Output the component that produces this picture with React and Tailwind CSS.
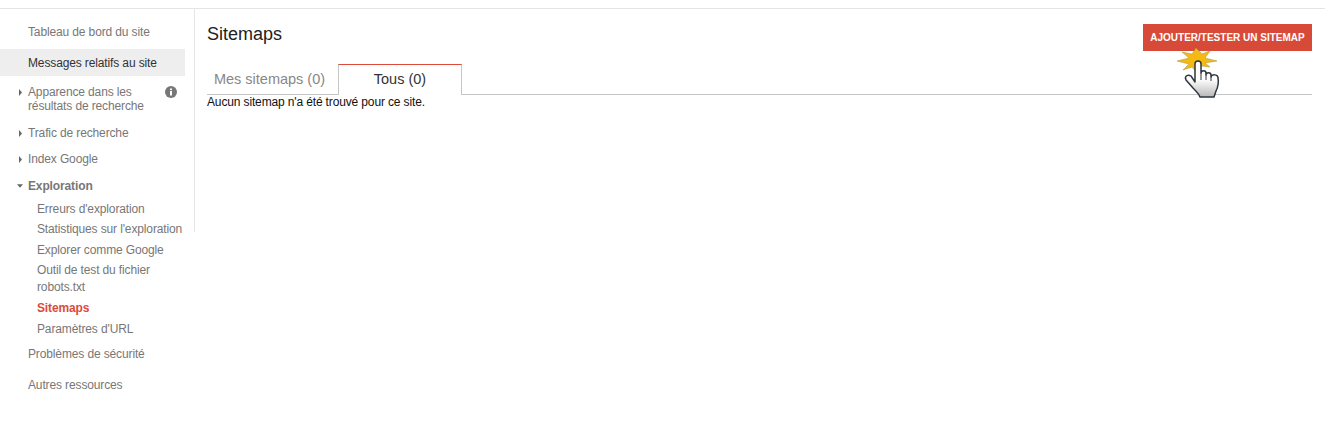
import React from "react";

const Arrow = ({ open }) =>
  open ? (
    <svg width="7" height="4" viewBox="0 0 7 4" className="mr-[5px] ml-[-1px]">
      <path d="M0 0h7L3.5 4z" fill="#666" />
    </svg>
  ) : (
    <svg width="3" height="7" viewBox="0 0 3 7" className="mr-[6px] ml-[1px]">
      <path d="M0 0l3 3.5L0 7z" fill="#666" />
    </svg>
  );

const TopItem = ({ label, arrow, mt, bold }) => (
  <div className={`flex items-center pl-[18px] h-[16px] ${mt} ${bold ? "font-bold" : ""}`}>
    <span className="flex w-[10px] items-center">{arrow && <Arrow open={bold} />}</span>
    <span>{label}</span>
  </div>
);

const SubItem = ({ label, mt, active }) => (
  <div className={`pl-[37px] leading-[17px] ${mt} ${active ? "font-bold text-[#dd4b39]" : ""}`}>{label}</div>
);

const Sidebar = () => (
  <aside className="w-[195px] h-[223px] shrink-0 border-r border-[#e5e5e5] text-[12px] tracking-[-0.13px] text-[#777]">
    <div className="w-[300px]">
      <TopItem label="Tableau de bord du site" mt="mt-[15px]" />
      <div className="mt-[9px] flex h-[27px] w-[185px] items-center bg-[#eeeeee] pl-[28px] text-[#333]">
        Messages relatifs au site
      </div>
      <div className="relative mt-[9px] w-[185px] pl-[18px] leading-[14px]">
        <div className="flex">
          <span className="flex h-[14px] w-[10px] items-center"><Arrow /></span>
          <span>
            Apparence dans les
            <br />
            résultats de recherche
          </span>
        </div>
        <svg width="12" height="12" viewBox="0 0 12 12" className="absolute right-[8px] top-[1px]">
          <circle cx="6" cy="6" r="6" fill="#777" />
          <rect x="5" y="5" width="2" height="4.500" fill="#fff" />
          <rect x="5" y="2.500" width="2" height="1.600" fill="#fff" />
        </svg>
      </div>
      <TopItem label="Trafic de recherche" arrow mt="mt-[12px]" />
      <TopItem label="Index Google" arrow mt="mt-[10px]" />
      <TopItem label="Exploration" arrow bold mt="mt-[11px]" />
      <SubItem label="Erreurs d'exploration" mt="mt-[7px]" />
      <SubItem label="Statistiques sur l'exploration" mt="mt-[3px]" />
      <SubItem label="Explorer comme Google" mt="mt-[4px]" />
      <SubItem label="Outil de test du fichier" mt="mt-[3px]" />
      <SubItem label="robots.txt" />
      <SubItem label="Sitemaps" mt="mt-[4px]" active />
      <SubItem label="Paramètres d'URL" mt="mt-[4px]" />
      <TopItem label="Problèmes de sécurité" mt="mt-[8px]" />
      <TopItem label="Autres ressources" mt="mt-[15px]" />
    </div>
  </aside>
);

const Cursor = () => (
  <svg width="42" height="54" viewBox="0 0 42 54" className="absolute left-[35px] top-[24px] overflow-visible">
    <path
      d="M18 0L24 6L32 3L27 10L39 13L27 15L32 19L24 18L19 25L14 19L5 22L11 16L-1 13L11 10L4 4L14 6z"
      fill="#f5b914"
      stroke="#a5903f"
      strokeWidth="0.5"
    />
    <defs>
      <linearGradient id="hand" x1="0" y1="0" x2="0" y2="1">
        <stop offset="0.5" stopColor="#ffffff" />
        <stop offset="1" stopColor="#b8b8b8" />
      </linearGradient>
    </defs>
    <path
      d="M17 34V16c0-4 6-4 6 0V25c0-3 5-3 5 0v2c0-3 5-3 5 0v2c0-3 7-3 7 1c1 5 0 9-2 13l-2 6H22c-1-3-4-6-7-9l-7-8c-2-4 2-6 5-4z"
      fill="url(#hand)"
      stroke="#2f3640"
      strokeWidth="1.500"
      strokeLinejoin="round"
    />
    <path d="M23 25v7M28 27v5M33 29v4" stroke="#2f3640" strokeWidth="1" fill="none" />
  </svg>
);

export default function App() {
  return (
    <div className="h-[440px] bg-white pt-[8px] font-['Liberation_Sans',Arial,sans-serif]">
      <div className="flex border-t border-[#e5e5e5]">
        <Sidebar />
        <main className="ml-[12px] mr-[13px] flex-1">
          <div className="flex items-start justify-between">
            <h1 className="mt-[15px] text-[18px] leading-[21px] text-[#222]">Sitemaps</h1>
            <div className="relative mt-[15px]">
              <button className="h-[27px] w-[169px] bg-[#d84a38] text-[10px] font-bold text-white">
                AJOUTER/TESTER UN SITEMAP
              </button>
              <Cursor />
            </div>
          </div>
          <div className="mt-[13px] flex h-[31px] border-b border-[#c6c6c6] text-[14.500px]">
            <div className="flex w-[131px] items-center justify-center pt-px pr-[6px] text-[#888]">Mes sitemaps (0)</div>
            <div className="flex h-[31px] w-[124px] items-center justify-center border-x border-t border-x-[#c6c6c6] border-t-[#dd4b39] bg-white text-[#333]">
              Tous (0)
            </div>
          </div>
          <p className="text-[12px] leading-[14px] tracking-[-0.14px] text-[#111]">
            Aucun sitemap n'a été trouvé pour ce site.
          </p>
        </main>
      </div>
    </div>
  );
}
